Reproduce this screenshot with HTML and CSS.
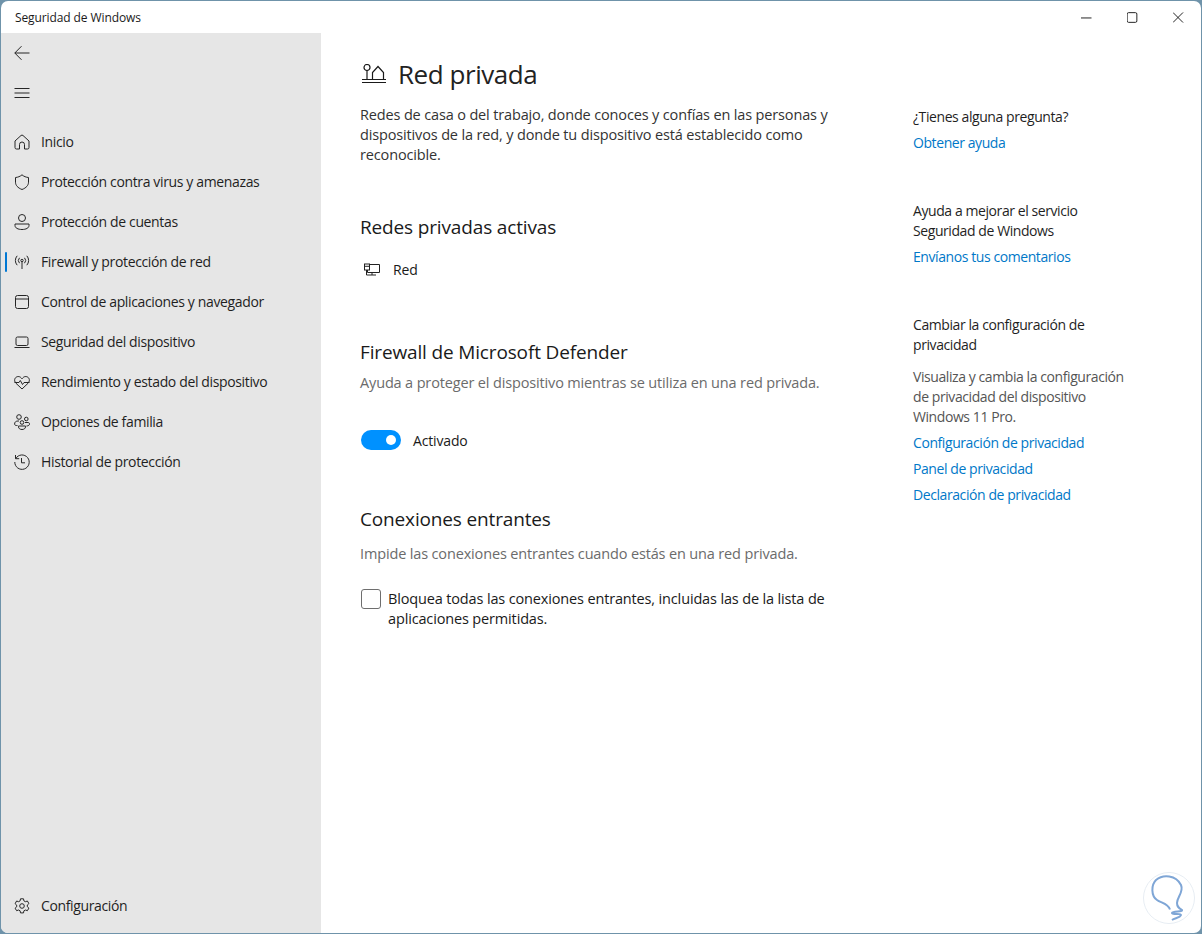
FILE: index.html
```html
<!DOCTYPE html>
<html lang="es">
<head>
<meta charset="utf-8">
<title>Seguridad de Windows</title>
<link rel="stylesheet" href="styles.css">
</head>
<body>
<div class="window">
  <header class="titlebar">
    <span class="app-title">Seguridad de Windows</span>
    <div class="controls">
      <svg class="ctl" viewBox="0 0 12 12"><path d="M0 6.500h12"/></svg>
      <svg class="ctl" viewBox="0 0 12 12"><rect x=".7" y=".7" width="10.600" height="10.600" rx="1.500"/></svg>
      <svg class="ctl" viewBox="0 0 12 12"><path d="M.5.500l11 11M11.500.500l-11 11"/></svg>
    </div>
  </header>
  <div class="body">
    <aside class="sidebar">
      <div class="tool">
        <svg class="icon" viewBox="0 0 16 16"><path d="M15.500 8H.8M7.500 1.200L.8 8l6.700 6.800"/></svg>
      </div>
      <div class="tool">
        <svg class="icon" viewBox="0 0 16 16"><path d="M.5 3.500h15M.5 8h15M.5 12.500h15"/></svg>
      </div>
      <nav class="nav">
        <a class="item"><svg class="icon" viewBox="0 0 16 16"><path d="M1 7l6-5.500a1.500 1.500 0 0 1 2 0L15 7v6.500a1.500 1.500 0 0 1-1.500 1.500h-3V10.500a2.500 2.500 0 0 0-5 0V15h-3A1.500 1.500 0 0 1 1 13.500z"/></svg><span>Inicio</span></a>
        <a class="item"><svg class="icon" viewBox="0 0 16 16"><path d="M8 .8C6 2.500 4 3.300 1.500 3.500v4.700c0 3 2.200 5.700 6.500 7.300 4.300-1.600 6.500-4.300 6.500-7.300V3.500C12 3.300 10 2.500 8 .8z"/></svg><span>Protección contra virus y amenazas</span></a>
        <a class="item"><svg class="icon" viewBox="0 0 16 16"><circle cx="8" cy="4" r="3.500"/><path d="M1 10h14v1.500c0 2.500-3 4-7 4s-7-1.500-7-4z"/></svg><span>Protección de cuentas</span></a>
        <a class="item active"><svg class="icon" viewBox="0 0 16 16"><circle cx="8" cy="6.500" r="1.200"/><path d="M8 7.500V15M5.500 3.800a4 4 0 0 0 0 5.400M10.500 3.800a4 4 0 0 1 0 5.400M3.200 1.800a7 7 0 0 0 0 9.400M12.800 1.800a7 7 0 0 1 0 9.400"/></svg><span>Firewall y protección de red</span></a>
        <a class="item"><svg class="icon" viewBox="0 0 16 16"><rect x="1.500" y="1.500" width="13" height="13" rx="2"/><path d="M1.500 5h13"/></svg><span>Control de aplicaciones y navegador</span></a>
        <a class="item"><svg class="icon" viewBox="0 0 16 16"><rect x="2" y="3" width="12" height="8.500" rx="1.500"/><path d="M.5 13.500h15"/></svg><span>Seguridad del dispositivo</span></a>
        <a class="item"><svg class="icon" viewBox="0 0 16 16"><path d="M2 9.300C.5 7.800.2 5.800 1.200 4.200c1.300-2 4.300-2.300 6-.3L8 4.800l.8-.9c1.700-2 4.700-1.700 6 .3 1 1.600.7 3.600-.8 5.100L8 15z"/><path d="M.5 8.500h4.500l1.300-2 2.200 4 1.500-2h5.500"/></svg><span>Rendimiento y estado del dispositivo</span></a>
        <a class="item"><svg class="icon" viewBox="0 0 16 16"><circle cx="5" cy="3" r="2.300"/><circle cx="12.300" cy="5" r="1.800"/><circle cx="8" cy="8.500" r="1.800"/><path d="M3.500 11.500H2.300C1.200 11.500.6 10.800.6 10c0-2 1.400-3 3.400-3h1M11 8.500h3c1 0 1.500.6 1.500 1.500 0 1-1 2-3 2M4.500 12h7v.8c0 1.700-1.500 2.700-3.500 2.700s-3.500-1-3.500-2.700z"/></svg><span>Opciones de familia</span></a>
        <a class="item"><svg class="icon" viewBox="0 0 16 16"><path d="M1.800 4.500A7.200 7.200 0 1 1 .8 8M1.500 1v3.700h3.700M7.500 4v4.800h3.500"/></svg><span>Historial de protección</span></a>
      </nav>
      <a class="item settings"><svg class="icon" viewBox="0 0 16 16"><circle cx="8" cy="8" r="2.300"/><path d="M6.500.8h3l.4 2.100 1.500.8 2-.7 1.500 2.600-1.600 1.400v1.700l1.600 1.400-1.500 2.600-2-.7-1.500.8-.4 2.100h-3l-.4-2.100-1.500-.8-2 .7L1.100 10.200l1.600-1.400V7.100L1.100 5.700 2.600 3l2 .7 1.500-.8z"/></svg><span>Configuración</span></a>
    </aside>
    <main class="content">
      <div class="primary">
        <div class="page-head">
          <svg class="page-icon" viewBox="0 0 26 20"><circle cx="6" cy="3.500" r="3"/><path d="M6 6.500V15M11.500 15V8.500L17 2.500l5.500 6V15M1 15.500h24M1 18.500h24"/></svg>
          <h1 class="page-title">Red privada</h1>
        </div>
        <p class="lead">Redes de casa o del trabajo, donde conoces y confías en las personas y dispositivos de la red, y donde tu dispositivo está establecido como reconocible.</p>

        <section class="sec-active">
          <h2 class="sec-title">Redes privadas activas</h2>
          <div class="net-row">
            <svg class="net-icon" viewBox="0 0 16 14"><path d="M5.500 1.500h10v8h-12V7"/><rect x=".5" y="1" width="5" height="6"/><path d="M.5 3.300h5M2.500 7v5M2.500 12h9.500M8 9.500V12"/></svg>
            <span>Red</span>
          </div>
        </section>

        <section class="sec-firewall">
          <h2 class="sec-title">Firewall de Microsoft Defender</h2>
          <p class="muted">Ayuda a proteger el dispositivo mientras se utiliza en una red privada.</p>
          <div class="toggle-row">
            <span class="toggle"><span class="knob"></span></span>
            <span class="toggle-label">Activado</span>
          </div>
        </section>

        <section class="sec-incoming">
          <h2 class="sec-title">Conexiones entrantes</h2>
          <p class="muted gap-more">Impide las conexiones entrantes cuando estás en una red privada.</p>
          <div class="check-row">
            <span class="checkbox"></span>
            <span class="check-label">Bloquea todas las conexiones entrantes, incluidas las de la lista de aplicaciones permitidas.</span>
          </div>
        </section>
      </div>
      <aside class="secondary">
        <div class="help-block">
          <p>¿Tienes alguna pregunta?</p>
          <a class="link">Obtener ayuda</a>
        </div>
        <div class="help-block">
          <p>Ayuda a mejorar el servicio<br>Seguridad de Windows</p>
          <a class="link">Envíanos tus comentarios</a>
        </div>
        <div class="help-block">
          <p>Cambiar la configuración de<br>privacidad</p>
          <p class="sub">Visualiza y cambia la configuración<br>de privacidad del dispositivo<br>Windows 11 Pro.</p>
          <a class="link">Configuración de privacidad</a>
          <a class="link">Panel de privacidad</a>
          <a class="link">Declaración de privacidad</a>
        </div>
      </aside>
    </main>
  </div>
  <svg class="watermark" viewBox="0 0 52 52"><circle cx="26" cy="26" r="25.500"/><path class="mark" d="M27 37.500C25 31 18 31 14 28 8 24 8 13 13 8 20 2 33 3 38 13 41 20 34 25 34 31 34 35 36 36 39 38 40 40 30 39 29 41 30 43 38 41 38 43 37 46 32 46 29 48"/></svg>
</div>
</body>
</html>
```

FILE: styles.css
```css
* { box-sizing: border-box; }
html, body { margin: 0; height: 100%; }
body {
  background: #6f93aa;
  font-family: "Open Sans", "Noto Sans", sans-serif;
  font-size: 14px;
  line-height: 20px;
  color: #1a1a1a;
  overflow: hidden;
  padding: 1px;
}
.window {
  position: relative;
  height: 932px;
  background: #fff;
  border-radius: 7px;
  overflow: hidden;
  display: flex;
  flex-direction: column;
}
.titlebar {
  height: 32px;
  flex: none;
  display: flex;
  align-items: center;
  justify-content: space-between;
  padding-left: 14px;
}
.app-title { font-size: 12px; letter-spacing: -0.1px; padding-top: 1px; }
.controls { display: flex; padding-top: 1px; }
.ctl {
  width: 46px;
  height: 11px;
  padding: 0 17.500px;
  fill: none;
  stroke: #111;
  stroke-width: 1;
}
.body { flex: 1; display: flex; min-height: 0; }
.sidebar {
  width: 320px;
  flex: none;
  background: #e6e6e6;
  display: flex;
  flex-direction: column;
}
.tool {
  height: 40px;
  flex: none;
  display: flex;
  align-items: center;
  padding-left: 13px;
}
.icon {
  width: 16px;
  height: 16px;
  flex: none;
  fill: none;
  stroke: #262626;
  stroke-width: 1;
}
.nav { margin-top: 9px; flex: 1; }
.item {
  position: relative;
  height: 40px;
  display: flex;
  align-items: center;
  gap: 11px;
  padding-left: 13px;
  letter-spacing: -0.36px;
  color: #1f1f1f;
}
.item.active::before {
  content: "";
  position: absolute;
  left: 4px;
  top: 10px;
  width: 2px;
  height: 20px;
  background: #0078d4;
  border-radius: 1px;
}
.settings { flex: none; margin-bottom: 7px; }
.content { flex: 1; display: flex; padding-left: 39px; }
.primary { width: 480px; flex: none; padding-top: 21px; font-size: 14.500px; letter-spacing: -0.15px; }
.page-head { display: flex; align-items: center; gap: 11px; height: 40px; }
.page-icon {
  width: 26px;
  height: 20px;
  margin-left: 1px;
  fill: none;
  stroke: #1a1a1a;
  stroke-width: 1.200;
}
.page-title { margin: 0; font-size: 26px; line-height: 40px; font-weight: 400; letter-spacing: -0.45px; color: #222; }
.lead { margin: 11px 0 0; color: #333; }
.sec-title { margin: 0; font-size: 19px; line-height: 24px; font-weight: 400; letter-spacing: -0.15px; }
.sec-active { margin-top: 50px; }
.net-row { display: flex; align-items: center; gap: 13px; margin-top: 21px; height: 20px; padding-left: 4px; font-size: 14px; }
.net-icon { width: 16px; height: 14px; fill: none; stroke: #222; stroke-width: 1; }
.sec-firewall { margin-top: 60px; }
.muted { margin: 9px 0 0; color: #6b6b6b; }
.gap-more { margin-top: 13px; }
.toggle-row { display: flex; align-items: center; gap: 12px; margin-top: 37px; height: 20px; font-size: 14px; }
.toggle-label { padding-top: 2px; }
.toggle {
  width: 40px;
  height: 20px;
  margin-left: 1px;
  border-radius: 10px;
  background: #0091ff;
  display: flex;
  align-items: center;
  justify-content: flex-end;
  padding-right: 5px;
}
.knob { width: 10px; height: 10px; border-radius: 50%; background: #fff; }
.sec-incoming { margin-top: 57px; }
.check-row { display: flex; gap: 7px; margin-top: 25px; }
.checkbox {
  width: 20px;
  height: 20px;
  flex: none;
  margin-left: 1px;
  border: 1px solid #6e6e6e;
  border-radius: 3px;
  background: #fff;
}
.check-label { width: 445px; }
.secondary { width: 250px; margin-left: 73px; padding-top: 74px; letter-spacing: -0.42px; }
.help-block { margin-bottom: 48px; }
.help-block p { margin: 0; color: #1f1f1f; }
.help-block .sub { margin-top: 12px; color: #555; }
.link { display: block; margin-top: 6px; color: #0078c8; }
.watermark {
  position: absolute;
  right: 6px;
  bottom: 9px;
  width: 52px;
  height: 52px;
  fill: none;
  stroke: #e7edf3;
  stroke-width: 1;
}
.watermark .mark { stroke: #7fa6d6; stroke-width: 2; }
```
